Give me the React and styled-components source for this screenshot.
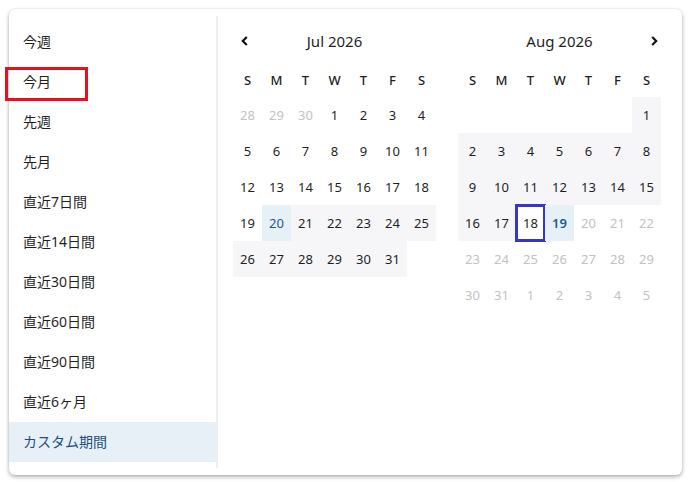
import React from 'react'
import styled, { createGlobalStyle, css } from 'styled-components';

const GlobalStyle = createGlobalStyle`
  html, body {
    margin: 0;
    padding: 0;
    background: #ffffff;
  }
  body {
    font-family: "Noto Sans", "Noto Sans CJK JP", sans-serif;
    color: #1f1f1f;
  }
`;

const Page = styled.div`
  padding: 9px;
`;

const Card = styled.div`
  width: 673px;
  height: 466px;
  box-sizing: border-box;
  display: flex;
  padding: 7px 0;
  background: #ffffff;
  border-radius: 6px;
  box-shadow: 0 2px 4px rgba(0, 0, 0, 0.3), 0 0 2px rgba(0, 0, 0, 0.12);
`;

const Sidebar = styled.ul`
  list-style: none;
  margin: 0;
  padding: 6px 0 6px 0;
  width: 207px;
  border-right: 2px solid #eeeeee;
`;

const Preset = styled.li`
  position: relative;
  height: 40px;
  line-height: 40px;
  padding-left: 14px;
  font-size: 14px;
  color: #1f1f1f;
  cursor: pointer;

  ${props => props.active && css`
    background: #e6f0f6;
    color: #1f4f7a;
  `}

  ${props => props.marked && css`
    &::after {
      content: '';
      position: absolute;
      left: -4px;
      top: 5px;
      width: 83px;
      height: 34px;
      box-sizing: border-box;
      border: 3px solid #e8101c;
    }
  `}
`;

const Calendars = styled.div`
  display: flex;
  gap: 22px;
  padding: 0 20px 0 15px;
`;

const Month = styled.div`
  width: 203px;
`;

const Header = styled.div`
  display: grid;
  grid-template-columns: 24px 1fr 24px;
  align-items: center;
  height: 36px;
  margin-top: 7px;
  margin-bottom: 4px;
`;

const Title = styled.div`
  grid-column: 2;
  text-align: center;
  font-size: 15px;
  color: #1f1f1f;
`;

const NavButton = styled.button`
  width: 24px;
  height: 24px;
  padding: 0;
  border: none;
  background: none;
  display: flex;
  align-items: center;
  justify-content: center;
  cursor: pointer;
  color: #111111;
  ${props => props.side === 'right' && css`
    grid-column: 3;
    justify-self: end;
    margin-right: -5px;
  `}
`;

const Weekdays = styled.div`
  display: grid;
  grid-template-columns: repeat(7, 29px);
  height: 34px;
  align-items: center;
`;

const Weekday = styled.div`
  text-align: center;
  font-size: 13px;
  font-weight: 500;
  color: #1f1f1f;
`;

const Week = styled.div`
  display: grid;
  grid-template-columns: repeat(7, 29px);
`;

const Day = styled.div`
  height: 36px;
  line-height: 36px;
  text-align: center;
  font-size: 13px;
  color: #1f1f1f;

  ${props => props.kind === 'muted' && css`
    color: #c2c2c2;
  `}
  ${props => props.kind === 'range' && css`
    background: #f6f6f9;
  `}
  ${props => props.kind === 'edge' && css`
    background: #e6f0f7;
    color: #1a5c92;
  `}
  ${props => props.today && css`
    font-weight: 600;
  `}
  ${props => props.focused && css`
    background: #ffffff;
    outline: 3px solid #3636c8;
    outline-offset: -2px;
  `}
`;

const Chevron = ({ dir }) => (
  <svg width="10" height="10" viewBox="0 0 10 10">
    <path
      d={dir === 'left' ? 'M6.8 1 L2.8 5 L6.8 9' : 'M3.2 1 L7.2 5 L3.2 9'}
      fill="none"
      stroke="currentColor"
      strokeWidth="2.2"
    />
  </svg>
);

const presets = [
  '今週', '今月', '先週', '先月', '直近7日間', '直近14日間',
  '直近30日間', '直近60日間', '直近90日間', '直近6ヶ月', 'カスタム期間'
];

const weekdayLabels = ['S', 'M', 'T', 'W', 'T', 'F', 'S'];

// [label, kind (muted / range / edge), flag (focus / today)]
const july = [
  [['28', 'muted'], ['29', 'muted'], ['30', 'muted'], ['1'], ['2'], ['3'], ['4']],
  [['5'], ['6'], ['7'], ['8'], ['9'], ['10'], ['11']],
  [['12'], ['13'], ['14'], ['15'], ['16'], ['17'], ['18']],
  [['19'], ['20', 'edge'], ['21', 'range'], ['22', 'range'], ['23', 'range'], ['24', 'range'], ['25', 'range']],
  [['26', 'range'], ['27', 'range'], ['28', 'range'], ['29', 'range'], ['30', 'range'], ['31', 'range'], ['']],
];

const august = [
  [[''], [''], [''], [''], [''], [''], ['1', 'range']],
  [['2', 'range'], ['3', 'range'], ['4', 'range'], ['5', 'range'], ['6', 'range'], ['7', 'range'], ['8', 'range']],
  [['9', 'range'], ['10', 'range'], ['11', 'range'], ['12', 'range'], ['13', 'range'], ['14', 'range'], ['15', 'range']],
  [['16', 'range'], ['17', 'range'], ['18', 'range', 'focus'], ['19', 'edge', 'today'], ['20', 'muted'], ['21', 'muted'], ['22', 'muted']],
  [['23', 'muted'], ['24', 'muted'], ['25', 'muted'], ['26', 'muted'], ['27', 'muted'], ['28', 'muted'], ['29', 'muted']],
  [['30', 'muted'], ['31', 'muted'], ['1', 'muted'], ['2', 'muted'], ['3', 'muted'], ['4', 'muted'], ['5', 'muted']],
];

const MonthView = ({ title, weeks, nav }) => (
  <Month>
    <Header>
      {nav === 'left' && <NavButton side="left"><Chevron dir="left" /></NavButton>}
      <Title>{title}</Title>
      {nav === 'right' && <NavButton side="right"><Chevron dir="right" /></NavButton>}
    </Header>
    <Weekdays>
      {weekdayLabels.map((w, i) => <Weekday key={i}>{w}</Weekday>)}
    </Weekdays>
    {weeks.map((week, wi) => (
      <Week key={wi}>
        {week.map(([label, kind, flag], di) => (
          <Day
            key={di}
            kind={kind}
            focused={flag === 'focus'}
            today={flag === 'today'}
          >
            {label}
          </Day>
        ))}
      </Week>
    ))}
  </Month>
);

export default function App() {
  return (
    <>
      <GlobalStyle />
      <Page>
        <Card>
          <Sidebar>
            {presets.map((p, i) => (
              <Preset key={p} active={i === presets.length - 1} marked={i === 1}>
                {p}
              </Preset>
            ))}
          </Sidebar>
          <Calendars>
            <MonthView title="Jul 2026" weeks={july} nav="left" />
            <MonthView title="Aug 2026" weeks={august} nav="right" />
          </Calendars>
        </Card>
      </Page>
    </>
  )
}
